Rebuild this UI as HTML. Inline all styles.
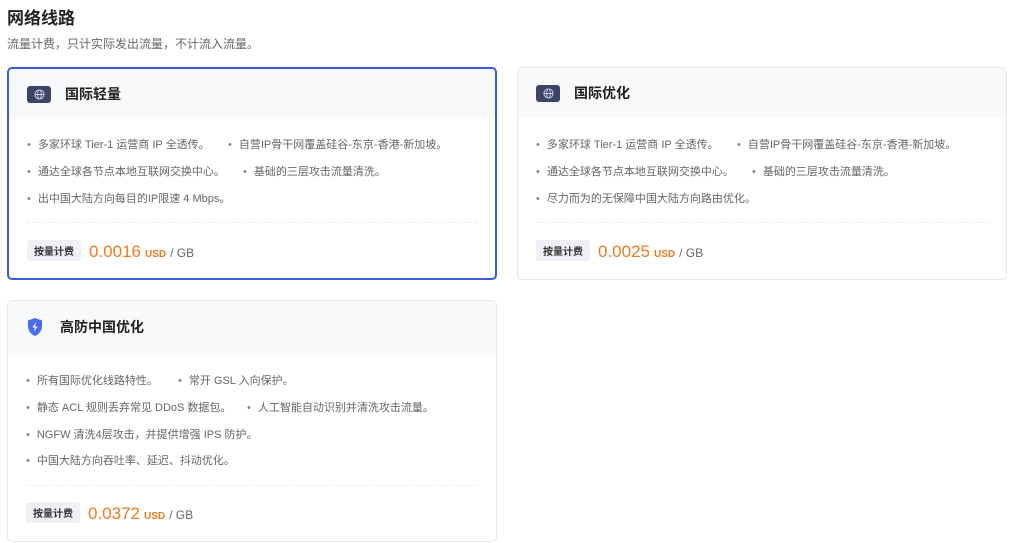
<!DOCTYPE html>
<html><head><meta charset="utf-8"><style>
*{margin:0;padding:0;box-sizing:border-box}
body{width:1024px;height:543px;background:#fff;font-family:"Liberation Sans","Noto Sans CJK SC",sans-serif;color:#333;position:relative;overflow:hidden}
h1{position:absolute;left:7px;top:4px;font-size:17px;font-weight:bold;color:#222}
.sub{position:absolute;left:7px;top:35px;font-size:12px;color:#666}
.card{position:absolute;border:1px solid #e6e8eb;border-radius:5px;background:#fff;overflow:hidden}
.card.sel{border:2px solid #3a5be0}
.hd{height:50px;background:#f8f9fb;display:flex;align-items:center;padding-left:18px;font-size:14px;font-weight:bold;color:#222}
.ic{width:24px;height:17px;background:#3d4466;border-radius:3px;margin-right:14px;display:flex;align-items:center;justify-content:center}
.li{position:absolute;font-size:11px;color:#666;white-space:nowrap}
.li:before{content:"•";color:#888;margin-right:7px}
.line{position:absolute;left:18px;right:18px;border-top:1px dashed #eceef0}
.pr{position:absolute;left:18px;display:flex;align-items:baseline;white-space:nowrap}
.tag{background:#eef0f5;font-size:10px;font-weight:bold;color:#333;padding:3px 7px;border-radius:3px;margin-right:8px;position:relative;top:-2px}
.num{color:#f07a1e;font-size:17px}
.usd{color:#f07a1e;font-size:10px;font-weight:bold;margin:0 4px}
.gb{color:#666;font-size:12px}
</style></head><body>
<h1>网络线路</h1>
<div class="sub">流量计费，只计实际发出流量，不计流入流量。</div>

<div class="card sel" style="left:7px;top:67px;width:490px;height:213px">
<div class="hd"><div class="ic"><svg width="11" height="11" viewBox="0 0 12 12" fill="none" stroke="#cdd3ee" stroke-width="1"><circle cx="6" cy="6" r="5"/><ellipse cx="6" cy="6" rx="2" ry="5"/><path d="M1 6h10"/></svg></div>国际轻量</div>
<div class="li" style="left:18px;top:67px">多家环球 Tier-1 运营商 IP 全透传。</div>
<div class="li" style="left:219px;top:67px">自营IP骨干网覆盖硅谷-东京-香港-新加坡。</div>
<div class="li" style="left:18px;top:94px">通达全球各节点本地互联网交换中心。</div>
<div class="li" style="left:234px;top:94px">基础的三层攻击流量清洗。</div>
<div class="li" style="left:18px;top:121px">出中国大陆方向每目的IP限速 4 Mbps。</div>
<div class="line" style="top:153px"></div>
<div class="pr" style="top:173px"><span class="tag">按量计费</span><span class="num">0.0016</span><span class="usd">USD</span><span class="gb">/ GB</span></div>
</div>

<div class="card" style="left:517px;top:67px;width:490px;height:213px">
<div class="hd"><div class="ic"><svg width="11" height="11" viewBox="0 0 12 12" fill="none" stroke="#cdd3ee" stroke-width="1"><circle cx="6" cy="6" r="5"/><ellipse cx="6" cy="6" rx="2" ry="5"/><path d="M1 6h10"/></svg></div>国际优化</div>
<div class="li" style="left:18px;top:68px">多家环球 Tier-1 运营商 IP 全透传。</div>
<div class="li" style="left:219px;top:68px">自营IP骨干网覆盖硅谷-东京-香港-新加坡。</div>
<div class="li" style="left:18px;top:95px">通达全球各节点本地互联网交换中心。</div>
<div class="li" style="left:234px;top:95px">基础的三层攻击流量清洗。</div>
<div class="li" style="left:18px;top:122px">尽力而为的无保障中国大陆方向路由优化。</div>
<div class="line" style="top:154px"></div>
<div class="pr" style="top:174px"><span class="tag">按量计费</span><span class="num">0.0025</span><span class="usd">USD</span><span class="gb">/ GB</span></div>
</div>

<div class="card" style="left:7px;top:300px;width:490px;height:242px">
<div class="hd" style="height:52px"><svg width="18" height="20" viewBox="0 0 18 20" style="margin-right:16px"><path d="M9 1L16 3.5V9c0 5-3.5 8.5-7 10C5.5 17.5 2 14 2 9V3.5z" fill="#4a6cf0"/><path d="M10 5L6.5 10.5H9L8 15l3.5-5.5H9z" fill="#fff"/></svg>高防中国优化</div>
<div class="li" style="left:18px;top:71px">所有国际优化线路特性。</div>
<div class="li" style="left:170px;top:71px">常开 GSL 入向保护。</div>
<div class="li" style="left:18px;top:98px">静态 ACL 规则丢弃常见 DDoS 数据包。</div>
<div class="li" style="left:239px;top:98px">人工智能自动识别并清洗攻击流量。</div>
<div class="li" style="left:18px;top:125px">NGFW 清洗4层攻击，并提供增强 IPS 防护。</div>
<div class="li" style="left:18px;top:151px">中国大陆方向吞吐率、延迟、抖动优化。</div>
<div class="line" style="top:184px"></div>
<div class="pr" style="top:203px"><span class="tag">按量计费</span><span class="num">0.0372</span><span class="usd">USD</span><span class="gb">/ GB</span></div>
</div>
</body></html>
